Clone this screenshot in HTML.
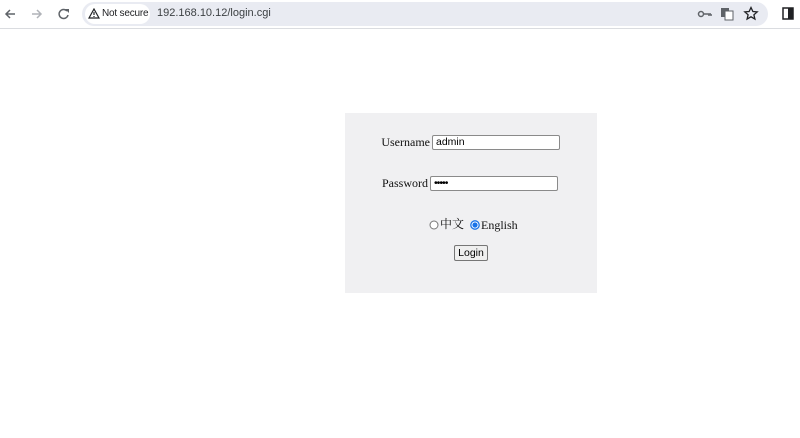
<!DOCTYPE html>
<html><head><style>
*{margin:0;padding:0;box-sizing:border-box}
body{width:800px;height:438px;background:#fff;position:relative;overflow:hidden;font-family:"Liberation Serif",serif}
.a{position:absolute}
.bar{left:0;top:0;width:800px;height:29px;background:#fff;border-bottom:1px solid #dadce0}
.omni{left:82px;top:2px;width:686px;height:24px;border-radius:12px;background:#e9ebf2}
.ns{left:85px;top:4px;width:65px;height:20px;border-radius:10px;background:#fff;font:10px "Liberation Sans",sans-serif;color:#202124;line-height:20px;padding-left:17px;white-space:nowrap;letter-spacing:-0.2px}
.url{left:157px;top:7px;font:11px "Liberation Sans",sans-serif;color:#3c4043}
.panel{left:345px;top:113px;width:252px;height:180px;background:#f0f0f2}
.lbl{font-size:12px;color:#111;white-space:nowrap}
.inp{height:15px;background:#fff;border:1px solid #8a8a8a;border-radius:2px;font:10.5px "Liberation Sans",sans-serif;padding-left:3px;line-height:13px;color:#000}
.btn{left:454px;top:245px;width:34px;height:16px;background:#efefef;border:1px solid #767676;border-radius:2px;font:10.5px "Liberation Sans",sans-serif;text-align:center;line-height:14px}
</style></head><body>
<div class="a bar"></div>
<svg class="a" style="left:4px;top:7px" width="72" height="14" viewBox="0 0 72 14">
<path d="M11 7H2M6 3L2 7l4 4" stroke="#5f6368" stroke-width="1.5" fill="none"/>
<path d="M28 7h9M33 3l4 4-4 4" stroke="#b0b3b8" stroke-width="1.5" fill="none"/>
<path d="M63 4a4.5 4.5 0 1 0 1 4" stroke="#5f6368" stroke-width="1.5" fill="none"/><path d="M61 2h4v4z" fill="#5f6368"/>
</svg>
<div class="a omni"></div>
<div class="a ns">Not secure</div>
<svg class="a" style="left:88px;top:8px" width="12" height="11"><path d="M6 1L11 10H1Z" stroke="#202124" stroke-width="1.2" fill="none"/><path d="M6 4v3M6 8v1" stroke="#202124" stroke-width="1.2"/></svg>
<div class="a url">192.168.10.12/login.cgi</div>
<svg class="a" style="left:697px;top:6px" width="100" height="16">
<circle cx="4" cy="8" r="2.5" stroke="#5f6368" stroke-width="1.5" fill="none"/><path d="M7 8h7M12 8v2M14 8v2" stroke="#5f6368" stroke-width="1.5"/>
<rect x="24" y="2" width="8" height="9" fill="#5f6368"/><rect x="28" y="5" width="8" height="9" fill="#fff" stroke="#5f6368"/>
<path d="M54 1.5l1.9 4 4.3.4-3.3 2.9 1 4.3-3.9-2.3-3.9 2.3 1-4.3-3.3-2.9 4.3-.4z" stroke="#202124" stroke-width="1.3" fill="none"/>
<rect x="86" y="2" width="10" height="11" stroke="#202124" stroke-width="1.5" fill="none"/><rect x="91" y="2" width="5" height="11" fill="#202124"/>
</svg>
<div class="a panel"></div>
<div class="a lbl" style="right:370px;top:135px">Username</div>
<div class="a inp" style="left:432px;top:135px;width:128px">admin</div>
<div class="a lbl" style="right:372px;top:176px">Password</div>
<div class="a inp" style="left:430px;top:176px;width:128px;letter-spacing:-1px">•••••</div>
<svg class="a" style="left:429px;top:220px" width="11" height="11"><circle cx="5" cy="5" r="4" fill="#fff" stroke="#767676"/></svg>
<div class="a lbl" style="left:440px;top:216px;font-family:'Noto Serif CJK SC','Noto Sans CJK SC',serif;line-height:16px">中文</div>
<svg class="a" style="left:470px;top:220px" width="11" height="11"><circle cx="5" cy="5" r="4.2" fill="#fff" stroke="#1a73e8" stroke-width="1.3"/><circle cx="5" cy="5" r="2.6" fill="#1a73e8"/></svg>
<div class="a lbl" style="left:481px;top:218px">English</div>
<div class="a btn">Login</div>
</body></html>
